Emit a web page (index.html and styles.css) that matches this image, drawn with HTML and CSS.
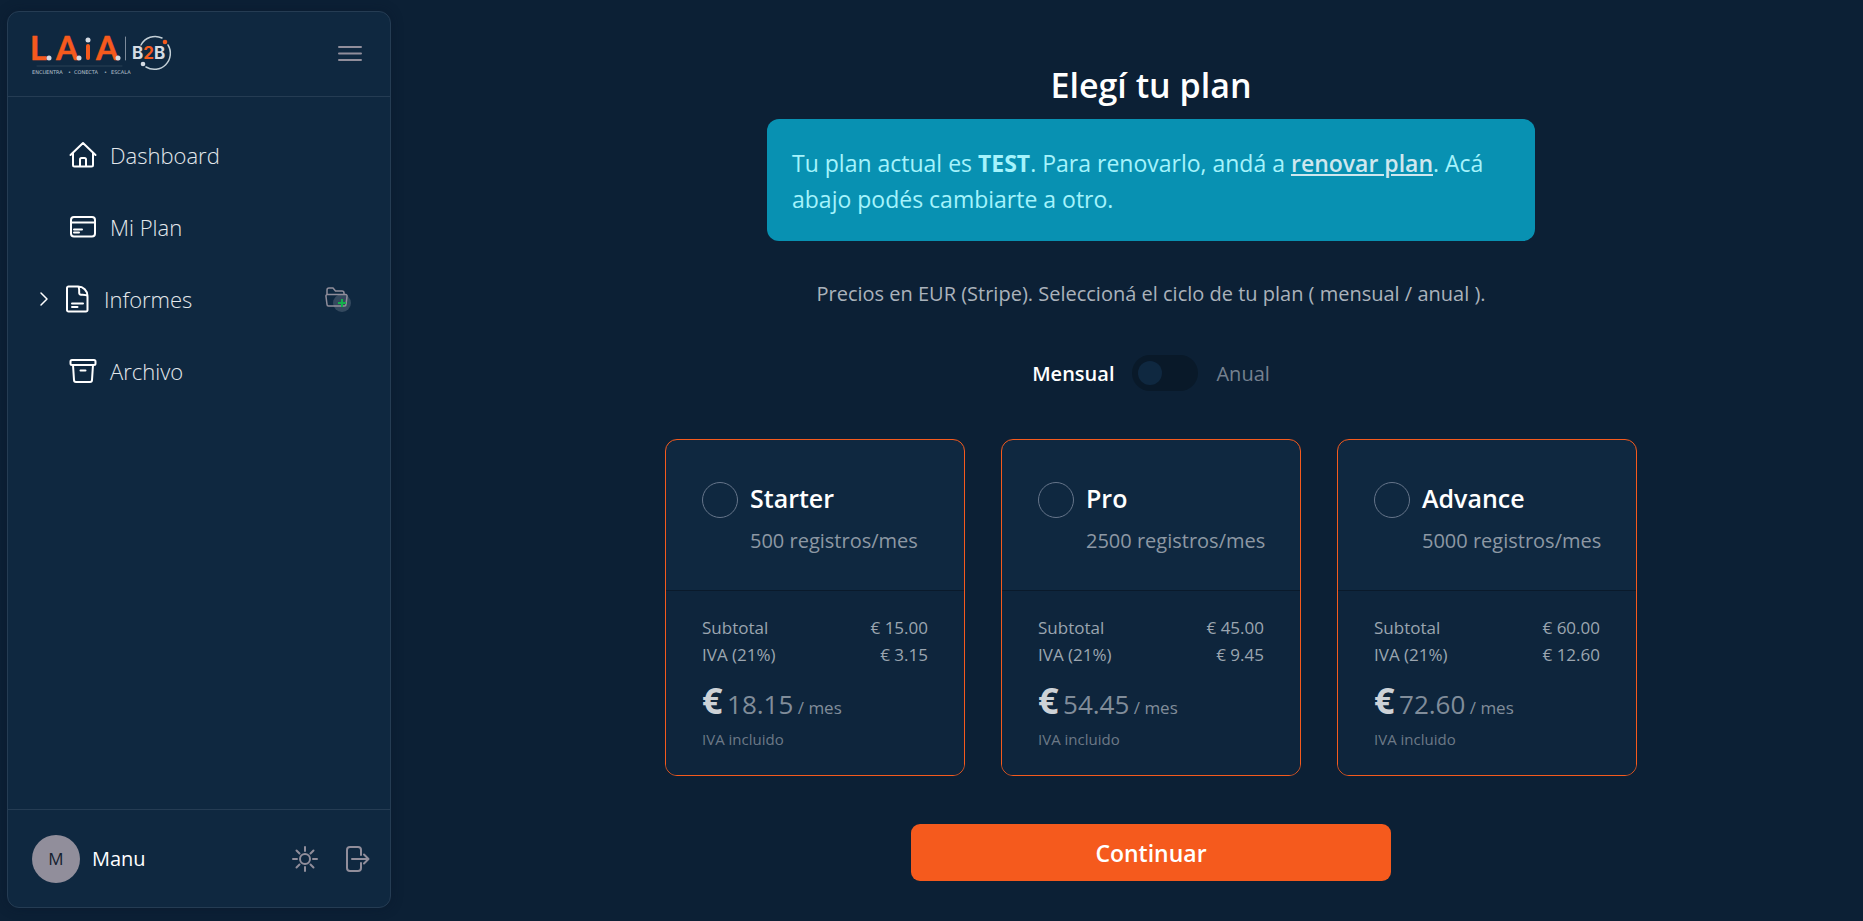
FILE: index.html
```html
<!DOCTYPE html>
<html lang="es">
<head>
    <meta charset="UTF-8">
    <meta name="viewport" content="width=device-width, initial-scale=1.0">
    <title>L.A.iA B2B - Elegí tu plan</title>
    <link rel="stylesheet" href="styles.css">
</head>
<body>
    <aside class="sidebar">
        <header class="sidebar-header">
            <a href="#" class="logo" aria-label="L.A.iA B2B">
                <svg width="146" height="54" viewBox="-4 -8 146 54">
                    <g class="logo-letras">
                        <text x="-2" y="25">L</text>
                        <text x="24" y="25">A</text>
                        <text x="64" y="25">A</text>
                    </g>
                    <path d="M56 11v12" stroke="#f55a1d" stroke-width="4"/>
                    <g fill="#d5dbe3">
                        <circle cx="56" cy="5" r="2.5"/>
                        <circle cx="17" cy="23" r="2.5"/>
                        <circle cx="47" cy="23" r="2.5"/>
                        <circle cx="86" cy="23" r="2.5"/>
                    </g>
                    <path d="M93.500 2v23" stroke="#7d8b9b"/>
                    <path d="M5 31h85" stroke="#2a4055"/>
                    <path d="M109 10a16 16 0 0 1 21-7M136 10a16 16 0 0 1-22 22" stroke="#c3cfd6" stroke-width="1.500"/>
                    <circle cx="133" cy="7" r="2.300" fill="#f55a1d"/>
                    <circle cx="111" cy="29" r="2.300" fill="#d5dbe3"/>
                    <text class="logo-b2b" x="100" y="24">B<tspan fill="#f55a1d">2</tspan>B</text>
                    <g class="logo-lema">
                        <text x="0" y="39">ENCUENTRA</text>
                        <text x="36" y="39">•</text>
                        <text x="42" y="39">CONECTA</text>
                        <text x="72" y="39">•</text>
                        <text x="79" y="39">ESCALA</text>
                    </g>
                </svg>
            </a>
            <button type="button" class="icon-btn" aria-label="Menú">
                <svg width="24" height="24" viewBox="0 0 24 24"><path d="M1 5h22M1 11.500h22M1 18h22"/></svg>
            </button>
        </header>

        <nav class="menu">
            <a href="#" class="menu-item">
                <svg width="28" height="28" viewBox="0 0 28 28"><path d="M1.500 14 14 2l12.500 12M4 12v12a1.500 1.500 0 0 0 1.500 1.500h17A1.500 1.500 0 0 0 24 24V12M11 25v-6.500a1.500 1.500 0 0 1 1.500-1.500h3a1.500 1.500 0 0 1 1.500 1.500V25"/></svg>
                Dashboard
            </a>
            <a href="#" class="menu-item">
                <svg width="28" height="28" viewBox="0 0 28 28"><rect x="2" y="4" width="24" height="19.500" rx="3"/><path d="M2 9.500h24M5 16.500h8M5 19.500h5"/></svg>
                Mi Plan
            </a>
            <div class="menu-row">
                <a href="#" class="menu-item menu-item-grupo">
                    <svg class="flecha" width="12" height="16" viewBox="0 0 12 16"><path d="m3 2 6 6-6 6"/></svg>
                    <svg width="28" height="28" viewBox="0 0 28 28"><path d="M5.500 1.500H15A9.500 9.500 0 0 1 24.500 11v14a1.500 1.500 0 0 1-1.500 1.500H5.500A1.500 1.500 0 0 1 4 25V3a1.500 1.500 0 0 1 1.500-1.500zM15 1.500c1.500 1 1.200 4 1.200 6.500a1.800 1.800 0 0 0 1.800 1.800c2.500 0 5.500-.3 6.500 1.200M9 18.500h11M9 22h5.500"/></svg>
                    Informes
                </a>
                <button type="button" class="icon-btn" aria-label="Nueva carpeta">
                    <svg width="28" height="28" viewBox="0 0 28 28">
                        <circle class="insignia" cx="18" cy="18" r="9"/>
                        <path class="carpeta" d="M3 9V5a2 2 0 0 1 2-2h4l2.500 3H18a2 2 0 0 1 2 2v1M3.500 9.500h18a1.500 1.500 0 0 1 1.500 2l-1 8a1.500 1.500 0 0 1-1.500 1.500H4.500A1.500 1.500 0 0 1 3 19.500l-1-8a1.500 1.500 0 0 1 1.500-2z"/>
                        <path class="mas" d="M18 14v8M14 18h8"/>
                    </svg>
                </button>
            </div>
            <a href="#" class="menu-item">
                <svg width="28" height="28" viewBox="0 0 28 28"><rect x="1.500" y="3" width="25" height="5" rx="1.500"/><path d="m4 8 1 15a2 2 0 0 0 2 2h14a2 2 0 0 0 2-2l1-15M11.500 13.500h5"/></svg>
                Archivo
            </a>
        </nav>

        <footer class="sidebar-footer">
            <span class="avatar">M</span>
            <span class="usuario">Manu</span>
            <button type="button" class="icon-btn" aria-label="Cambiar tema">
                <svg width="26" height="26" viewBox="0 0 26 26"><circle cx="13" cy="13" r="5"/><path d="M13 1v4M13 21v4M1 13h4M21 13h4M4.500 4.500l3 3M18.500 18.500l3 3M4.500 21.500l3-3M18.500 7.500l3-3"/></svg>
            </button>
            <button type="button" class="icon-btn" aria-label="Salir">
                <svg width="26" height="26" viewBox="0 0 26 26"><path d="M17 9V4a3 3 0 0 0-3-3H6a3 3 0 0 0-3 3v18a3 3 0 0 0 3 3h8a3 3 0 0 0 3-3v-5M8 13h16M20 8.500l4.500 4.500-4.500 4.500"/></svg>
            </button>
        </footer>
    </aside>

    <main class="contenido">
        <h1>Elegí tu plan</h1>

        <div class="aviso">
            Tu plan actual es <strong>TEST</strong>. Para renovarlo, andá a <a href="#">renovar plan</a>. Acá abajo podés cambiarte a otro.
        </div>

        <p class="nota">Precios en EUR (Stripe). Seleccioná el ciclo de tu plan ( mensual / anual ).</p>

        <label class="ciclo">
            <span class="ciclo-activo">Mensual</span>
            <input type="checkbox" class="switch" name="ciclo">
            <span>Anual</span>
        </label>

        <div class="planes">
            <label class="plan">
                <span class="plan-cabecera">
                    <input type="radio" name="plan" value="starter">
                    <span class="plan-titulo">
                        <span class="plan-nombre">Starter</span>
                        <span class="plan-registros">500 registros/mes</span>
                    </span>
                </span>
                <span class="plan-detalle">
                    <span class="linea"><span>Subtotal</span><span>€ 15.00</span></span>
                    <span class="linea"><span>IVA (21%)</span><span>€ 3.15</span></span>
                    <span class="precio"><b>€</b> <span class="monto">18.15</span> / mes</span>
                    <span class="iva">IVA incluido</span>
                </span>
            </label>

            <label class="plan">
                <span class="plan-cabecera">
                    <input type="radio" name="plan" value="pro">
                    <span class="plan-titulo">
                        <span class="plan-nombre">Pro</span>
                        <span class="plan-registros">2500 registros/mes</span>
                    </span>
                </span>
                <span class="plan-detalle">
                    <span class="linea"><span>Subtotal</span><span>€ 45.00</span></span>
                    <span class="linea"><span>IVA (21%)</span><span>€ 9.45</span></span>
                    <span class="precio"><b>€</b> <span class="monto">54.45</span> / mes</span>
                    <span class="iva">IVA incluido</span>
                </span>
            </label>

            <label class="plan">
                <span class="plan-cabecera">
                    <input type="radio" name="plan" value="advance">
                    <span class="plan-titulo">
                        <span class="plan-nombre">Advance</span>
                        <span class="plan-registros">5000 registros/mes</span>
                    </span>
                </span>
                <span class="plan-detalle">
                    <span class="linea"><span>Subtotal</span><span>€ 60.00</span></span>
                    <span class="linea"><span>IVA (21%)</span><span>€ 12.60</span></span>
                    <span class="precio"><b>€</b> <span class="monto">72.60</span> / mes</span>
                    <span class="iva">IVA incluido</span>
                </span>
            </label>
        </div>

        <button type="submit" class="continuar">Continuar</button>
    </main>
</body>
</html>
```
FILE: styles.css
```css
* {
    box-sizing: border-box;
}
body {
    margin: 0;
    min-height: 100vh;
    display: flex;
    background-color: #0c2035;
    color: #fff;
    font-family: "Segoe UI", "Open Sans", "Noto Sans", sans-serif;
    font-size: 20px;
}
svg {
    display: block;
    flex: none;
    fill: none;
    stroke-linecap: round;
    stroke-linejoin: round;
}

/* Barra lateral */
.sidebar {
    width: 384px;
    flex: none;
    margin: 11px 7px 13px;
    display: flex;
    flex-direction: column;
    background-color: #0f2840;
    border: 1px solid #253c53;
    border-radius: 12px;
    box-shadow: 0 0 12px rgba(8, 20, 40, 0.4);
}
.sidebar-header {
    display: flex;
    align-items: center;
    justify-content: space-between;
    height: 85px;
    padding: 0 28px 0 20px;
    border-bottom: 1px solid #253c53;
}
.logo-letras {
    font-family: Lato, sans-serif;
    font-size: 32px;
    font-weight: bold;
    fill: #f55a1d;
    stroke: #f55a1d;
    stroke-width: 0.5;
}
.logo-b2b {
    font-family: Inter, sans-serif;
    font-size: 17px;
    font-weight: bold;
    fill: #d5dbe3;
}
.logo-lema {
    font-family: "DejaVu Sans", sans-serif;
    font-size: 5px;
    fill: #b9c4d0;
}
.icon-btn {
    padding: 0;
    border: none;
    background: none;
    cursor: pointer;
}
.icon-btn svg {
    stroke: #918e9b;
    stroke-width: 2;
}
.menu {
    flex: 1;
    display: flex;
    flex-direction: column;
    padding: 22px 24px;
}
.menu-item {
    display: flex;
    align-items: center;
    gap: 13px;
    height: 72px;
    padding-left: 37px;
    color: #e4e8ec;
    font-size: 22px;
    font-weight: 300;
    text-decoration: none;
}
.menu-item svg {
    stroke: #fff;
    stroke-width: 2;
}
.menu-row {
    display: flex;
    align-items: center;
    justify-content: space-between;
    padding-right: 14px;
}
.menu-item-grupo {
    padding-left: 6px;
}
.menu-item .flecha {
    stroke-width: 1.5;
}
.insignia {
    fill: #34495e;
    stroke: none;
}
.icon-btn .carpeta {
    stroke-width: 1.5;
}
.icon-btn .mas {
    stroke: #12b04a;
    stroke-linecap: butt;
}
.sidebar-footer {
    display: flex;
    align-items: center;
    height: 98px;
    padding: 0 20px 0 24px;
    border-top: 1px solid #253c53;
}
.sidebar-footer .icon-btn {
    margin-left: 26px;
}
.avatar {
    width: 48px;
    height: 48px;
    border-radius: 50%;
    background-color: #918e9b;
    color: #14202e;
    font-size: 17px;
    line-height: 48px;
    text-align: center;
}
.usuario {
    flex: 1;
    margin-left: 12px;
    font-size: 20px;
    font-weight: 500;
}

/* Contenido */
.contenido {
    flex: 1;
    display: flex;
    flex-direction: column;
    align-items: center;
    padding: 61px 0 36px 41px;
}
h1 {
    margin: 0 0 10px;
    font-size: 34px;
    font-weight: 600;
    line-height: 48px;
}
.aviso {
    width: 768px;
    max-width: 100%;
    padding: 26px 25px 24px;
    border-radius: 12px;
    background-color: #0891b2;
    color: #a5f3fc;
    font-size: 23px;
    line-height: 36px;
}
.aviso a {
    color: #cfe7ee;
    font-weight: 600;
}
.nota {
    margin: 37px 0 35px;
    color: #aab2bb;
    line-height: 32px;
}
.ciclo {
    display: flex;
    align-items: center;
    gap: 18px;
    margin-top: 10px;
    color: #75818f;
}
.ciclo-activo {
    color: #fff;
    font-weight: 600;
}
.switch {
    appearance: none;
    width: 66px;
    height: 36px;
    margin: 0;
    padding: 6px;
    border-radius: 18px;
    background-color: #091929;
}
.switch::before {
    content: "";
    display: block;
    width: 24px;
    height: 24px;
    border-radius: 50%;
    background-color: #0f2840;
}
.switch:checked::before {
    margin-left: auto;
}
.planes {
    display: grid;
    grid-template-columns: repeat(3, 300px);
    gap: 36px;
    margin: 48px 0;
}
.plan {
    border: 1px solid #f55a1d;
    border-radius: 12px;
    background-color: #0f2840;
    overflow: hidden;
}
.plan-cabecera {
    display: flex;
    gap: 12px;
    padding: 36px 36px 33px;
    border-bottom: 1px solid #0a1a2b;
}
.plan-cabecera input {
    appearance: none;
    flex: none;
    width: 36px;
    height: 36px;
    margin: 6px 0 0;
    border: 1px solid #66758a;
    border-radius: 50%;
}
.plan-cabecera input:checked {
    background-color: #f55a1d;
}
.plan-titulo {
    display: flex;
    flex-direction: column;
    gap: 4px;
}
.plan-nombre {
    font-size: 25px;
    font-weight: 600;
    line-height: 45px;
}
.plan-registros {
    color: #8d98a4;
    line-height: 32px;
    white-space: nowrap;
}
.plan-detalle {
    display: flex;
    flex-direction: column;
    padding: 23px 36px 26px;
    background-color: #0e253c;
    color: #9ba5b0;
    font-size: 17px;
}
.linea {
    display: flex;
    justify-content: space-between;
    line-height: 27px;
}
.precio {
    margin-top: 12px;
    color: #818d9a;
    line-height: 42px;
}
.precio b {
    color: #cdd2d7;
    font-size: 36px;
}
.monto {
    font-size: 26px;
}
.iva {
    color: #6c7987;
    font-size: 15px;
    line-height: 20px;
}
.continuar {
    width: 480px;
    max-width: 100%;
    height: 57px;
    border: none;
    border-radius: 9px;
    background-color: #f55a1d;
    color: #fff;
    font-family: inherit;
    font-size: 23px;
    font-weight: 600;
    cursor: pointer;
}
```
